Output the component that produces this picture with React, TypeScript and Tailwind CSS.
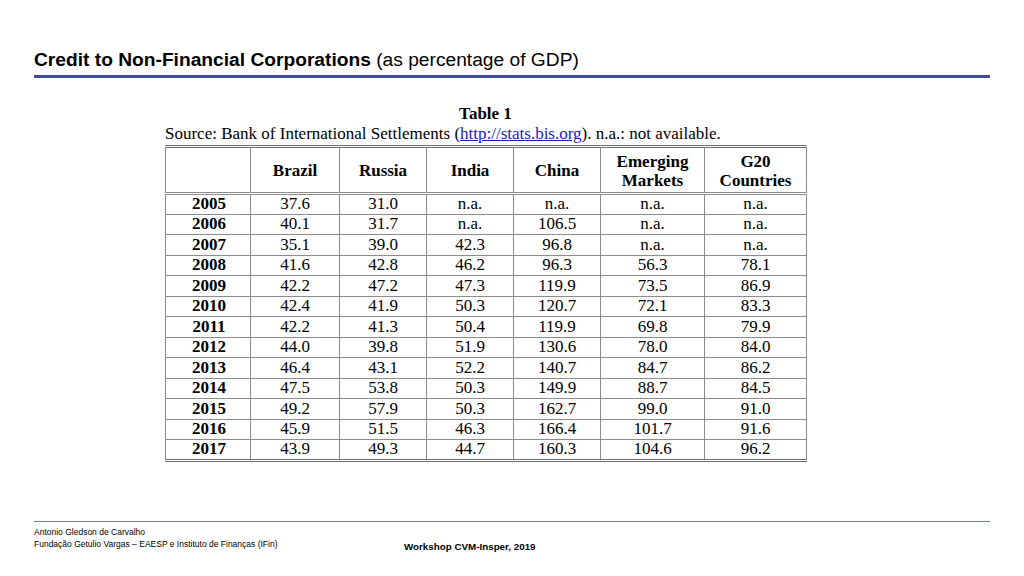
// Slide: credit to non-financial corporations, BIS table
const cols = ['Brazil', 'Russia', 'India', 'China']

const rows: [string, string[]][] = [
  ['2005', ['37.6', '31.0', 'n.a.', 'n.a.', 'n.a.', 'n.a.']],
  ['2006', ['40.1', '31.7', 'n.a.', '106.5', 'n.a.', 'n.a.']],
  ['2007', ['35.1', '39.0', '42.3', '96.8', 'n.a.', 'n.a.']],
  ['2008', ['41.6', '42.8', '46.2', '96.3', '56.3', '78.1']],
  ['2009', ['42.2', '47.2', '47.3', '119.9', '73.5', '86.9']],
  ['2010', ['42.4', '41.9', '50.3', '120.7', '72.1', '83.3']],
  ['2011', ['42.2', '41.3', '50.4', '119.9', '69.8', '79.9']],
  ['2012', ['44.0', '39.8', '51.9', '130.6', '78.0', '84.0']],
  ['2013', ['46.4', '43.1', '52.2', '140.7', '84.7', '86.2']],
  ['2014', ['47.5', '53.8', '50.3', '149.9', '88.7', '84.5']],
  ['2015', ['49.2', '57.9', '50.3', '162.7', '99.0', '91.0']],
  ['2016', ['45.9', '51.5', '46.3', '166.4', '101.7', '91.6']],
  ['2017', ['43.9', '49.3', '44.7', '160.3', '104.6', '96.2']],
]

export default function App() {
  return (
    <div className="w-[1024px] h-[576px] bg-white flex flex-col overflow-hidden font-['Liberation_Sans',Arial,sans-serif] text-black">
      {/* Title */}
      <div className="px-[34px] pt-[48px]">
        <h1 className="text-[19.2px] leading-[24px] whitespace-nowrap">
          <span className="font-bold">Credit to Non-Financial Corporations</span> (as percentage of GDP)
        </h1>
        <div className="mt-[3px] h-[3px] bg-[#3b4f9b] w-[956px]" />
      </div>

      {/* Table block */}
      <div className="ml-[165px] w-[641px] mt-[26px] font-['Liberation_Serif','Times_New_Roman',serif]">
        <div className="text-center font-bold text-[17px] leading-[20px]">Table 1</div>
        <div className="text-[17px] leading-[20px] whitespace-nowrap">
          Source: Bank of International Settlements (
          <span className="text-[#1a1acc] underline">http://stats.bis.org</span>). n.a.: not available.
        </div>
        <table className="mt-[1px] border-collapse table-fixed w-[641px] text-[17px]">
          <colgroup>
            <col className="w-[85px]" />
            <col className="w-[89px]" />
            <col className="w-[87px]" />
            <col className="w-[87px]" />
            <col className="w-[87px]" />
            <col className="w-[104px]" />
            <col className="w-[102px]" />
          </colgroup>
          <thead>
            <tr className="h-[47px] border-t-[3px] border-double border-[#6e6e6e]">
              <th className="border-x border-b-[3px] border-double border-[#8c8c8c]" />
              {cols.map(c => (
                <th key={c} className="border-x border-b-[3px] border-double border-[#8c8c8c] font-bold leading-[19px] pt-[1px]">
                  {c}
                </th>
              ))}
              <th className="border-x border-b-[3px] border-double border-[#8c8c8c] font-bold leading-[19px] pt-[1px]">
                Emerging<br />Markets
              </th>
              <th className="border-x border-b-[3px] border-double border-[#8c8c8c] font-bold leading-[19px] pt-[1px]">
                G20<br />Countries
              </th>
            </tr>
          </thead>
          <tbody>
            {rows.map(([year, vals], i) => (
              <tr
                key={year}
                className={i === rows.length - 1 ? 'h-[20.5px] border-b-[3px] border-double border-[#6e6e6e]' : 'h-[20.5px]'}
              >
                <td className="border border-[#8c8c8c] text-center font-bold leading-[18px] p-0 pl-[2px]">{year}</td>
                {vals.map((v, j) => (
                  <td key={j} className="border border-[#8c8c8c] text-center leading-[18px] p-0">
                    {v}
                  </td>
                ))}
              </tr>
            ))}
          </tbody>
        </table>
      </div>

      {/* Footer */}
      <div className="mt-auto px-[34px] pb-[21px]">
        <div className="h-px bg-[#6d7f96] w-[956px]" />
        <div className="flex items-start mt-[4px]">
          <div className="text-[8.5px] leading-[12px] w-[370px]">
            <div>Antonio Gledson de Carvalho</div>
            <div>Fundação Getulio Vargas – EAESP e Instituto de Finanças (IFin)</div>
          </div>
          <div className="text-[9.8px] font-bold mt-[14px] whitespace-nowrap">Workshop CVM-Insper, 2019</div>
        </div>
      </div>
    </div>
  )
}
